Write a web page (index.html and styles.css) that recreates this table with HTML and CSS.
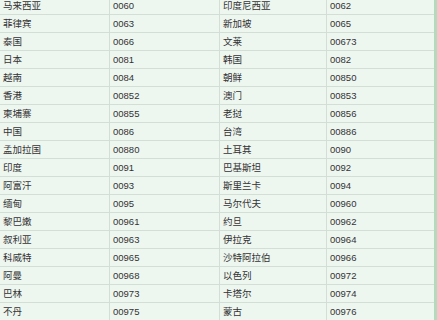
FILE: index.html
```html
<!DOCTYPE html>
<html lang="zh">
<head>
  <meta charset="UTF-8" />
  <title>国际区号</title>
  <link rel="stylesheet" href="styles.css">
</head>
<body>
  <div class="wrap">
    <table class="codes">
      <colgroup>
        <col class="c1"><col class="c2"><col class="c3"><col class="c4">
      </colgroup>
      <tr><td>马来西亚</td><td>0060</td><td>印度尼西亚</td><td>0062</td></tr>
      <tr><td>菲律宾</td><td>0063</td><td>新加坡</td><td>0065</td></tr>
      <tr><td>泰国</td><td>0066</td><td>文莱</td><td>00673</td></tr>
      <tr><td>日本</td><td>0081</td><td>韩国</td><td>0082</td></tr>
      <tr><td>越南</td><td>0084</td><td>朝鲜</td><td>00850</td></tr>
      <tr><td>香港</td><td>00852</td><td>澳门</td><td>00853</td></tr>
      <tr><td>柬埔寨</td><td>00855</td><td>老挝</td><td>00856</td></tr>
      <tr><td>中国</td><td>0086</td><td>台湾</td><td>00886</td></tr>
      <tr><td>孟加拉国</td><td>00880</td><td>土耳其</td><td>0090</td></tr>
      <tr><td>印度</td><td>0091</td><td>巴基斯坦</td><td>0092</td></tr>
      <tr><td>阿富汗</td><td>0093</td><td>斯里兰卡</td><td>0094</td></tr>
      <tr><td>缅甸</td><td>0095</td><td>马尔代夫</td><td>00960</td></tr>
      <tr><td>黎巴嫩</td><td>00961</td><td>约旦</td><td>00962</td></tr>
      <tr><td>叙利亚</td><td>00963</td><td>伊拉克</td><td>00964</td></tr>
      <tr><td>科威特</td><td>00965</td><td>沙特阿拉伯</td><td>00966</td></tr>
      <tr><td>阿曼</td><td>00968</td><td>以色列</td><td>00972</td></tr>
      <tr><td>巴林</td><td>00973</td><td>卡塔尔</td><td>00974</td></tr>
      <tr><td>不丹</td><td>00975</td><td>蒙古</td><td>00976</td></tr>
    </table>
  </div>
</body>
</html>
```

FILE: styles.css
```css
body {
  margin: 0;
  background: #eef6f0;
  font-family: "Liberation Sans", Arial, "Noto Sans CJK SC", sans-serif;
  color: #333;
  overflow: hidden;
}
.wrap {
  width: 434px;
  height: 320px;
  border-right: 3px solid #b3dbbb;
  overflow: hidden;
}
.codes {
  border-collapse: collapse;
  width: 436px;
  margin: -4px 0 0 -1px;
  table-layout: fixed;
  font-size: 9.5px;
}
.c1 { width: 110px; }
.c2 { width: 110px; }
.c3 { width: 107px; }
.c4 { width: 109px; }
.codes td {
  border: 1px solid #d3dfd6;
  height: 17px;
  padding: 0 3px;
  box-sizing: border-box;
  line-height: 17px;
  white-space: nowrap;
}
```
